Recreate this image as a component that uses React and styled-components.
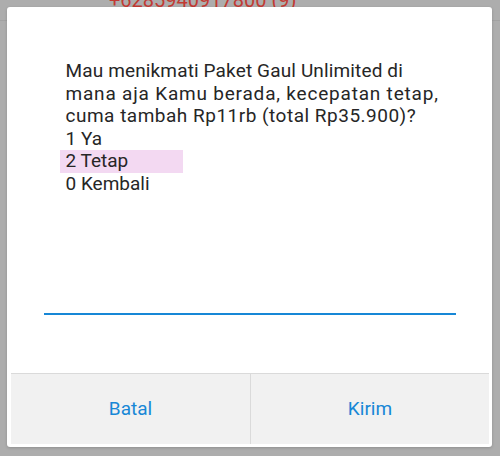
import React from 'react';
import styled, { createGlobalStyle } from 'styled-components';

const GlobalStyle = createGlobalStyle`
  html, body {
    margin: 0;
    padding: 0;
    background: #adadad;
  }
  body {
    font-family: Roboto, "Noto Sans", Arial, sans-serif;
  }
`;

const PROMPT = [
  { text: 'Mau menikmati Paket Gaul Unlimited di', track: 0.14 },
  { text: 'mana aja Kamu berada, kecepatan tetap,', track: 0.8 },
  { text: 'cuma tambah Rp11rb (total Rp35.900)?', track: 0.5 },
];
const MENU_LINES = ['1 Ya', '2 Tetap', '0 Kembali'];
const SELECTED = '2 Tetap';

export default function App() {
  return (
    <>
      <GlobalStyle />
      <Screen>
        <TopBar>
          <Number>+6285940917800 (9)</Number>
        </TopBar>
        <Dialog>
          <Message>
            {PROMPT.map(line => (
              <Line key={line.text} track={line.track}>
                {line.text}
              </Line>
            ))}
            {MENU_LINES.map(line => (
              <Option key={line} selected={line === SELECTED}>
                {line}
              </Option>
            ))}
          </Message>
          <InputLine />
          <ButtonBar>
            <ActionBtn>Batal</ActionBtn>
            <ActionBtn divider>Kirim</ActionBtn>
          </ButtonBar>
        </Dialog>
      </Screen>
    </>
  );
}

const BLUE = '#1787d6';

const Screen = styled.div`
  position: relative;
  width: 500px;
  height: 456px;
  overflow: hidden;
  background: #adadad;
`;

const TopBar = styled.div`
  height: 20px;
  border-bottom: 1px solid #a2a2a2;
  overflow: hidden;
  padding-left: 109px;
`;

const Number = styled.div`
  margin-top: -12px;
  font-size: 20px;
  line-height: 24px;
  color: #c23a33;
`;

const Dialog = styled.div`
  position: absolute;
  top: 7px;
  left: 7px;
  width: 485px;
  height: 440px;
  background: #fff;
  border-radius: 3px;
  box-shadow: 0 1px 3px rgba(0, 0, 0, 0.18);
  display: flex;
  flex-direction: column;
`;

const Message = styled.div`
  padding: 53px 0 0 58.5px;
  font-size: 19px;
  line-height: 22.5px;
  color: #262626;
  white-space: nowrap;
`;

const Line = styled.div`
  letter-spacing: ${({ track }) => track}px;
`;

const Option = styled.div`
  width: 123px;
  margin-left: -5.5px;
  padding-left: 5.5px;
  box-sizing: border-box;
  background: ${({ selected }) => (selected ? '#f3d9f2' : 'transparent')};
`;

const InputLine = styled.div`
  margin: 117.5px 36px 0 37px;
  border-bottom: 2.5px solid ${BLUE};
`;

const ButtonBar = styled.div`
  margin: auto 3px 3px 4px;
  height: 70px;
  display: grid;
  grid-template-columns: 239px 1fr;
  border-top: 1px solid #dadada;
  background: #f1f1f1;
`;

const ActionBtn = styled.div`
  display: flex;
  align-items: center;
  justify-content: center;
  padding-bottom: 2px;
  font-size: 19px;
  color: ${BLUE};
  border-left: ${({ divider }) => (divider ? '1px solid #dadada' : 'none')};
`;
